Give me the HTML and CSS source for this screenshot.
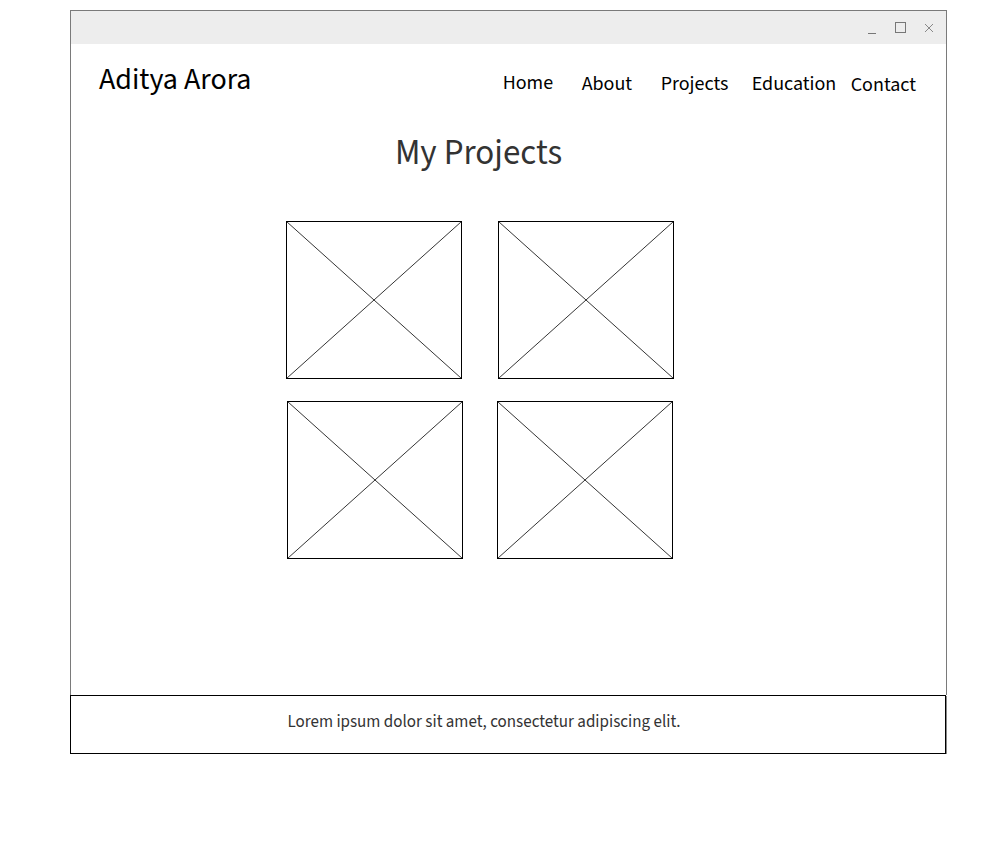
FILE: index.html
```html
<!DOCTYPE html>
<html lang="en">
<head>
<meta charset="utf-8">
<title>Aditya Arora - Projects</title>
<link rel="stylesheet" href="styles.css">
</head>
<body>
<div class="window">
  <div class="titlebar">
    <span class="ctl ctl-min"><svg width="10" height="10" viewBox="0 0 10 10"><line x1="1" y1="8.5" x2="9" y2="8.5" stroke="#777" stroke-width="1"/></svg></span>
    <span class="ctl ctl-max"><svg width="12" height="12" viewBox="0 0 12 12"><rect x="0.5" y="0.5" width="10" height="10" fill="none" stroke="#777" stroke-width="1"/></svg></span>
    <span class="ctl ctl-close"><svg width="10" height="10" viewBox="0 0 10 10"><path d="M1 1L9 9M9 1L1 9" stroke="#888" stroke-width="1"/></svg></span>
  </div>
  <div class="content">
    <header class="header">
      <div class="brand">Aditya Arora</div>
      <nav class="nav">
        <a class="nav-item n-home">Home</a>
        <a class="nav-item n-about">About</a>
        <a class="nav-item n-projects">Projects</a>
        <a class="nav-item n-education">Education</a>
        <a class="nav-item n-contact">Contact</a>
      </nav>
    </header>
    <main class="main">
      <h1 class="title">My Projects</h1>
      <div class="grid">
        <div class="ph ph-a"><svg width="176" height="158" viewBox="0 0 176 158"><rect x="0.5" y="0.5" width="175" height="157" fill="#fff" stroke="#000"/><line x1="0.5" y1="0.5" x2="175.5" y2="157.5" stroke="#000" stroke-width="0.8"/><line x1="175.5" y1="0.5" x2="0.5" y2="157.5" stroke="#000" stroke-width="0.8"/></svg></div>
        <div class="ph ph-b"><svg width="176" height="158" viewBox="0 0 176 158"><rect x="0.5" y="0.5" width="175" height="157" fill="#fff" stroke="#000"/><line x1="0.5" y1="0.5" x2="175.5" y2="157.5" stroke="#000" stroke-width="0.8"/><line x1="175.5" y1="0.5" x2="0.5" y2="157.5" stroke="#000" stroke-width="0.8"/></svg></div>
        <div class="ph ph-c"><svg width="176" height="158" viewBox="0 0 176 158"><rect x="0.5" y="0.5" width="175" height="157" fill="#fff" stroke="#000"/><line x1="0.5" y1="0.5" x2="175.5" y2="157.5" stroke="#000" stroke-width="0.8"/><line x1="175.5" y1="0.5" x2="0.5" y2="157.5" stroke="#000" stroke-width="0.8"/></svg></div>
        <div class="ph ph-d"><svg width="176" height="158" viewBox="0 0 176 158"><rect x="0.5" y="0.5" width="175" height="157" fill="#fff" stroke="#000"/><line x1="0.5" y1="0.5" x2="175.5" y2="157.5" stroke="#000" stroke-width="0.8"/><line x1="175.5" y1="0.5" x2="0.5" y2="157.5" stroke="#000" stroke-width="0.8"/></svg></div>
      </div>
    </main>
  </div>
</div>
<footer class="footer">
  <p class="footer-text">Lorem ipsum dolor sit amet, consectetur adipiscing elit.</p>
</footer>
</body>
</html>
```

FILE: styles.css
```css
html, body {
  margin: 0;
  padding: 0;
  background: #fff;
}

body {
  font-family: "Source Sans Pro", "Source Sans 3", Lato, "Liberation Sans", sans-serif;
  color: #000;
}

.window {
  margin: 10px 0 0 70px;
  width: 875px;
  border: 1px solid #7a7a7a;
  border-bottom: none;
}

.titlebar {
  height: 33px;
  background: #ededed;
  display: flex;
  align-items: center;
  justify-content: flex-end;
  padding-right: 12px;
}

.ctl {
  display: flex;
  align-items: center;
  justify-content: center;
}

.ctl svg {
  display: block;
}

.ctl-min {
  margin-right: 18px;
  padding-top: 4px;
}

.ctl-max {
  margin-right: 17px;
}

.content {
  height: 651px;
}

.header {
  display: flex;
  align-items: flex-start;
  justify-content: space-between;
  padding: 19px 30px 0 28px;
  height: 40px;
}

.brand {
  font-size: 30px;
  line-height: 34px;
  color: #000;
}

.nav {
  display: flex;
  margin-top: 8px;
}

.nav-item {
  display: block;
  font-size: 20px;
  line-height: 24px;
  color: #000;
  text-decoration: none;
}

.n-home { width: 79px; }
.n-about { width: 79px; padding-top: 1px; }
.n-projects { width: 91px; padding-top: 1px; }
.n-education { width: 99px; padding-top: 1px; }
.n-contact { padding-top: 2px; }

.main {
  display: flex;
  flex-direction: column;
  align-items: center;
  padding-right: 58px;
}

.title {
  margin: 30px 2px 0 0;
  font-size: 35px;
  line-height: 40px;
  font-weight: 400;
  color: #333;
}

.grid {
  margin-top: 48px;
  display: grid;
  grid-template-columns: 176px 176px;
  column-gap: 36px;
  row-gap: 22px;
}

.ph svg {
  display: block;
}

.ph-c { margin-left: 1px; }
.ph-d { margin-left: -1px; }

.footer {
  margin-left: 70px;
  width: 874px;
  height: 57px;
  border: 1px solid #000;
  box-shadow: 1px 1px 0 #888;
  display: flex;
  align-items: center;
  justify-content: center;
}

.footer-text {
  margin: 0 48px 6px 0;
  font-size: 17px;
  line-height: 20px;
  color: #333;
}
```
